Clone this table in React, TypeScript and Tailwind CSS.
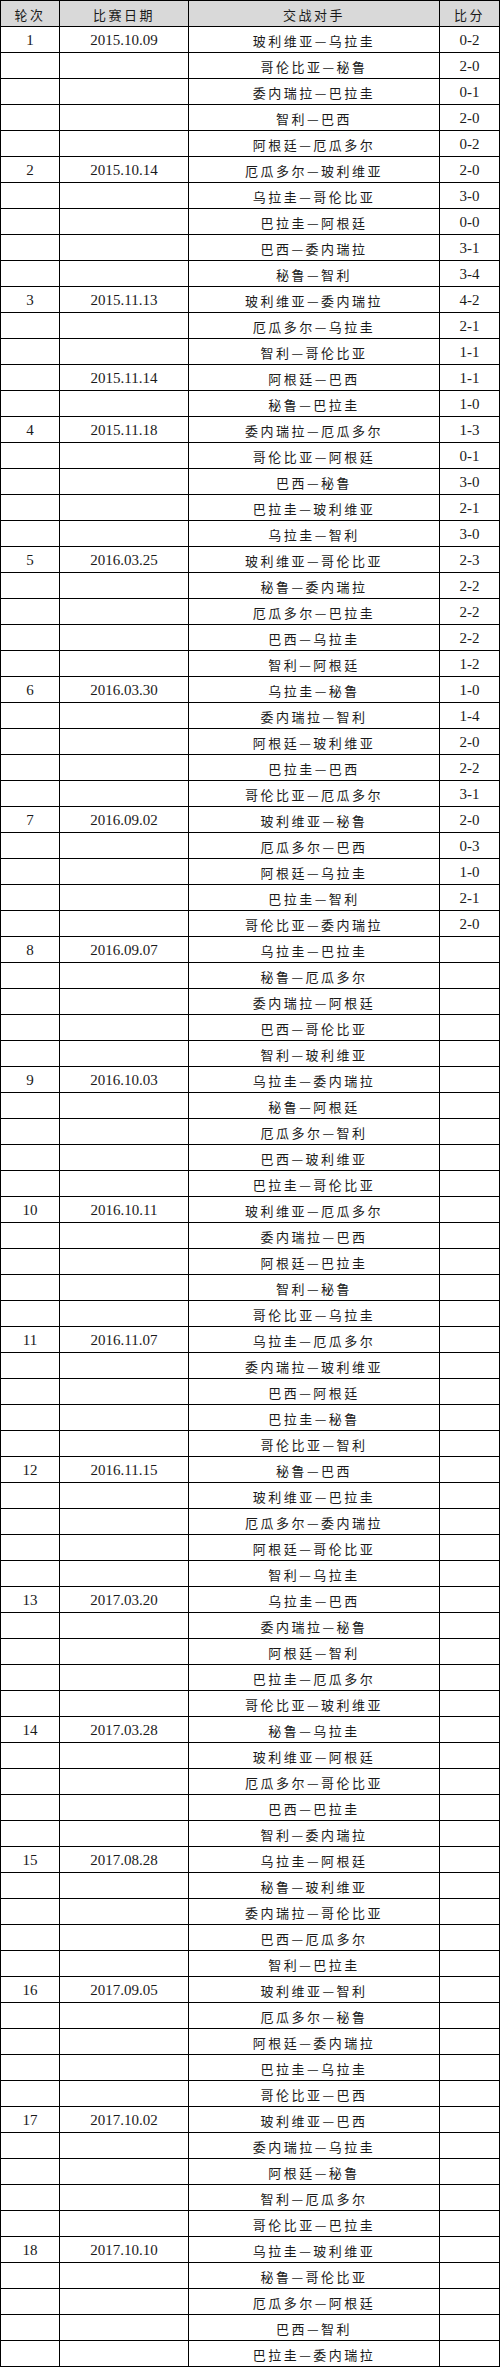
import React from "react";

type Match = [string, string];
type Round = { n: number; rows: { date?: string; m: string; s?: string }[] };

const raw: { n: number; date: string; matches: [string, string?, string?][] }[] = [
  { n: 1, date: "2015.10.09", matches: [["玻利维亚—乌拉圭", "0-2"], ["哥伦比亚—秘鲁", "2-0"], ["委内瑞拉—巴拉圭", "0-1"], ["智利—巴西", "2-0"], ["阿根廷—厄瓜多尔", "0-2"]] },
  { n: 2, date: "2015.10.14", matches: [["厄瓜多尔—玻利维亚", "2-0"], ["乌拉圭—哥伦比亚", "3-0"], ["巴拉圭—阿根廷", "0-0"], ["巴西—委内瑞拉", "3-1"], ["秘鲁—智利", "3-4"]] },
  { n: 3, date: "2015.11.13", matches: [["玻利维亚—委内瑞拉", "4-2"], ["厄瓜多尔—乌拉圭", "2-1"], ["智利—哥伦比亚", "1-1"], ["阿根廷—巴西", "1-1", "2015.11.14"], ["秘鲁—巴拉圭", "1-0"]] },
  { n: 4, date: "2015.11.18", matches: [["委内瑞拉—厄瓜多尔", "1-3"], ["哥伦比亚—阿根廷", "0-1"], ["巴西—秘鲁", "3-0"], ["巴拉圭—玻利维亚", "2-1"], ["乌拉圭—智利", "3-0"]] },
  { n: 5, date: "2016.03.25", matches: [["玻利维亚—哥伦比亚", "2-3"], ["秘鲁—委内瑞拉", "2-2"], ["厄瓜多尔—巴拉圭", "2-2"], ["巴西—乌拉圭", "2-2"], ["智利—阿根廷", "1-2"]] },
  { n: 6, date: "2016.03.30", matches: [["乌拉圭—秘鲁", "1-0"], ["委内瑞拉—智利", "1-4"], ["阿根廷—玻利维亚", "2-0"], ["巴拉圭—巴西", "2-2"], ["哥伦比亚—厄瓜多尔", "3-1"]] },
  { n: 7, date: "2016.09.02", matches: [["玻利维亚—秘鲁", "2-0"], ["厄瓜多尔—巴西", "0-3"], ["阿根廷—乌拉圭", "1-0"], ["巴拉圭—智利", "2-1"], ["哥伦比亚—委内瑞拉", "2-0"]] },
  { n: 8, date: "2016.09.07", matches: [["乌拉圭—巴拉圭"], ["秘鲁—厄瓜多尔"], ["委内瑞拉—阿根廷"], ["巴西—哥伦比亚"], ["智利—玻利维亚"]] },
  { n: 9, date: "2016.10.03", matches: [["乌拉圭—委内瑞拉"], ["秘鲁—阿根廷"], ["厄瓜多尔—智利"], ["巴西—玻利维亚"], ["巴拉圭—哥伦比亚"]] },
  { n: 10, date: "2016.10.11", matches: [["玻利维亚—厄瓜多尔"], ["委内瑞拉—巴西"], ["阿根廷—巴拉圭"], ["智利—秘鲁"], ["哥伦比亚—乌拉圭"]] },
  { n: 11, date: "2016.11.07", matches: [["乌拉圭—厄瓜多尔"], ["委内瑞拉—玻利维亚"], ["巴西—阿根廷"], ["巴拉圭—秘鲁"], ["哥伦比亚—智利"]] },
  { n: 12, date: "2016.11.15", matches: [["秘鲁—巴西"], ["玻利维亚—巴拉圭"], ["厄瓜多尔—委内瑞拉"], ["阿根廷—哥伦比亚"], ["智利—乌拉圭"]] },
  { n: 13, date: "2017.03.20", matches: [["乌拉圭—巴西"], ["委内瑞拉—秘鲁"], ["阿根廷—智利"], ["巴拉圭—厄瓜多尔"], ["哥伦比亚—玻利维亚"]] },
  { n: 14, date: "2017.03.28", matches: [["秘鲁—乌拉圭"], ["玻利维亚—阿根廷"], ["厄瓜多尔—哥伦比亚"], ["巴西—巴拉圭"], ["智利—委内瑞拉"]] },
  { n: 15, date: "2017.08.28", matches: [["乌拉圭—阿根廷"], ["秘鲁—玻利维亚"], ["委内瑞拉—哥伦比亚"], ["巴西—厄瓜多尔"], ["智利—巴拉圭"]] },
  { n: 16, date: "2017.09.05", matches: [["玻利维亚—智利"], ["厄瓜多尔—秘鲁"], ["阿根廷—委内瑞拉"], ["巴拉圭—乌拉圭"], ["哥伦比亚—巴西"]] },
  { n: 17, date: "2017.10.02", matches: [["玻利维亚—巴西"], ["委内瑞拉—乌拉圭"], ["阿根廷—秘鲁"], ["智利—厄瓜多尔"], ["哥伦比亚—巴拉圭"]] },
  { n: 18, date: "2017.10.10", matches: [["乌拉圭—玻利维亚"], ["秘鲁—哥伦比亚"], ["厄瓜多尔—阿根廷"], ["巴西—智利"], ["巴拉圭—委内瑞拉"]] },
];

const cjk = "font-['Noto_Sans_CJK_SC',sans-serif] text-[13px] tracking-[2.5px]";
const num = "font-['Liberation_Serif','Times_New_Roman',serif] text-[15px]";

function Cell({ w, children, cls, last }: { w: string; children?: React.ReactNode; cls?: string; last?: boolean }) {
  return (
    <div className={`${w} ${last ? "" : "border-r border-black"} flex items-center justify-center pt-[1px] leading-none text-[#1a1a1a] ${cls ?? ""}`}>
      {children}
    </div>
  );
}

export default function App() {
  const rows: { round?: number; date?: string; m: string; s?: string }[] = [];
  raw.forEach((r) => {
    r.matches.forEach((mt, i) => {
      rows.push({
        round: i === 0 ? r.n : undefined,
        date: i === 0 ? r.date : mt[2],
        m: mt[0],
        s: mt[1],
      });
    });
  });
  return (
    <div className="w-[500px] bg-white border-t border-l border-r border-black">
      <div className="flex h-[26px] border-b border-black bg-[#d9d9d9]">
        <Cell w="w-[59px]" cls={cjk}>轮次</Cell>
        <Cell w="w-[129px]" cls={cjk}>比赛日期</Cell>
        <Cell w="w-[251px]" cls={cjk}>交战对手</Cell>
        <Cell w="flex-1" cls={cjk} last>比分</Cell>
      </div>
      {rows.map((r, i) => (
        <div key={i} className="flex h-[26px] border-b border-black">
          <Cell w="w-[59px]" cls={num}>{r.round ?? ""}</Cell>
          <Cell w="w-[129px]" cls={num}>{r.date ?? ""}</Cell>
          <Cell w="w-[251px]" cls={cjk}>{r.m}</Cell>
          <Cell w="flex-1" cls={num} last>{r.s ?? ""}</Cell>
        </div>
      ))}
    </div>
  );
}
